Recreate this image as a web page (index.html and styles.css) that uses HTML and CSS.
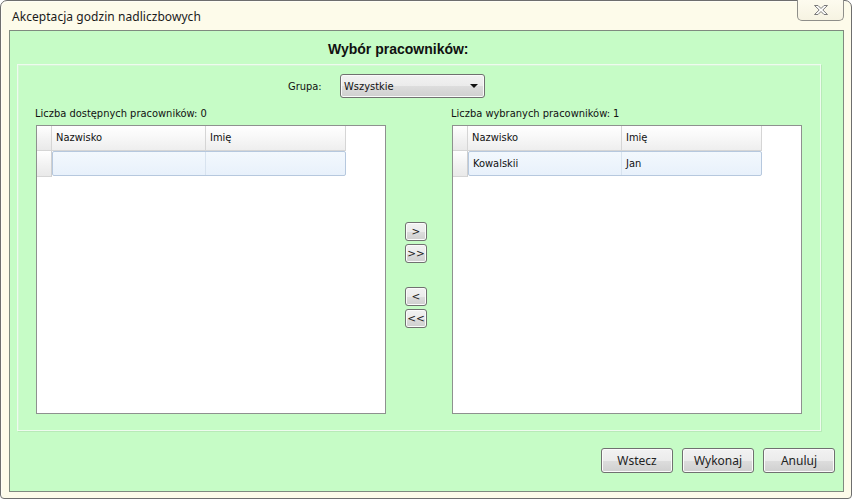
FILE: index.html
```html
<!DOCTYPE html>
<html>
<head>
<meta charset="utf-8">
<link rel="stylesheet" href="styles.css">
</head>
<body>
<div class="window">
  <div class="titlebar">
    <span class="wtitle">Akceptacja godzin nadliczbowych</span>
    <div class="close">
      <svg width="18" height="12" viewBox="0 0 18 12"><path d="M2.5 1.5h3.5l3 3 3-3h3.5l-4.7 4.5 4.7 4.5h-3.5l-3-3-3 3h-3.5l4.7-4.5z" fill="#fff" stroke="#7a7a7a" stroke-width="1" stroke-linejoin="round"/></svg>
    </div>
  </div>
  <div class="panel">
    <div class="heading">Wybór pracowników:</div>
    <div class="group">
      <div class="grouprow">
        <span class="glabel">Grupa:</span>
        <div class="combo"><span>Wszystkie</span><span class="arrow"></span></div>
      </div>
      <div class="lists">
        <div class="listcol">
          <div class="count">Liczba dostępnych pracowników: 0</div>
          <div class="grid">
            <div class="ghead">
              <div class="rh"></div>
              <div class="hc c1">Nazwisko</div>
              <div class="hc c2">Imię</div>
            </div>
            <div class="grow">
              <div class="rh rowh"></div>
              <div class="cells"><div class="dc c1"></div><div class="dc c2"></div></div>
            </div>
          </div>
        </div>
        <div class="moves">
          <div class="mgroup">
            <button class="mbtn">&gt;</button>
            <button class="mbtn">&gt;&gt;</button>
          </div>
          <div class="mgroup">
            <button class="mbtn">&lt;</button>
            <button class="mbtn">&lt;&lt;</button>
          </div>
        </div>
        <div class="listcol">
          <div class="count">Liczba wybranych pracowników: 1</div>
          <div class="grid">
            <div class="ghead">
              <div class="rh"></div>
              <div class="hc c1">Nazwisko</div>
              <div class="hc c2">Imię</div>
            </div>
            <div class="grow">
              <div class="rh rowh"></div>
              <div class="cells"><div class="dc c1">Kowalskii</div><div class="dc c2">Jan</div></div>
            </div>
          </div>
        </div>
      </div>
    </div>
    <div class="actions">
      <button class="abtn">Wstecz</button>
      <button class="abtn">Wykonaj</button>
      <button class="abtn">Anuluj</button>
    </div>
  </div>
</div>
</body>
</html>
```
FILE: styles.css
```css
* { box-sizing: border-box; }
html, body { margin: 0; padding: 0; background: #ffffff; }
body { width: 852px; height: 499px; overflow: hidden; font-family: "Liberation Sans", Arial, sans-serif; }

.window {
  width: 852px; height: 499px;
  background: #fdfbea;
  border: 1px solid #6e6e6e;
  border-radius: 7px 7px 4px 4px;
  box-shadow: inset 1px 1px 0 #fffef6;
  display: flex; flex-direction: column;
  position: relative;
}
.titlebar {
  height: 29px; flex: none;
  display: flex; align-items: center;
  padding-left: 11px;
}
.wtitle {
  font-family: "Noto Sans", "Open Sans", sans-serif;
  font-size: 12px; color: #1a1a1a; letter-spacing: 0.05px;
  margin-top: 2px;
}
.close {
  position: absolute; top: -1px; right: 7px;
  width: 47px; height: 21px;
  border: 1px solid #8f8f8a; border-top: none;
  border-radius: 0 0 5px 5px;
  background: linear-gradient(#fdfbef, #f6f3e2);
  display: flex; align-items: center; justify-content: center;
}

.panel {
  flex: 1;
  margin: 0 7px 6px 8px;
  background: #c6fcc6;
  border: 1px solid #7f8a7f;
  display: flex; flex-direction: column;
}
.heading {
  height: 33px; flex: none;
  font-weight: bold; font-size: 14px; color: #111;
  padding-left: 318px; padding-top: 10px;
}
.group {
  margin: 0 22px 0 7px;
  height: 367px; flex: none;
  border: 1px solid #eefbee;
  box-shadow: inset 1px 1px 0 #d5f5d5, 1px 1px 0 #b8eab8;
  padding: 9px 18px 0 18px;
  display: flex; flex-direction: column;
}
.grouprow {
  height: 24px; display: flex; align-items: center;
  padding-left: 252px;
}
.glabel {
  font-family: "DejaVu Sans Condensed", "DejaVu Sans", sans-serif; font-size: 11px; color: #111;
  width: 52px;
}
.combo {
  width: 145px; height: 24px;
  border: 1px solid #707070; border-radius: 3px;
  background: linear-gradient(#f2f2f2 0%, #ebebeb 50%, #dddddd 51%, #cfcfcf 100%);
  box-shadow: inset 0 0 0 1px #fafafa;
  display: flex; align-items: center; justify-content: space-between;
  padding: 0 6px 0 3px;
  font-family: "DejaVu Sans Condensed", "DejaVu Sans", sans-serif; font-size: 11px; color: #111;
}
.arrow {
  width: 0; height: 0;
  border-left: 4px solid transparent; border-right: 4px solid transparent;
  border-top: 4px solid #111;
}
.lists { display: flex; margin-top: 7px; }
.listcol { width: 350px; display: flex; flex-direction: column; }
.count {
  font-family: "DejaVu Sans Condensed", "DejaVu Sans", sans-serif; font-size: 11px; color: #111;
  height: 20px; padding-top: 2px; margin-left: -1px;
}
.grid {
  width: 350px; height: 289px;
  border: 1px solid #8e918f; background: #fff;
}
.ghead { display: flex; height: 25px; }
.rh { width: 15px; flex: none; background: linear-gradient(#fff, #f1f1f1 60%, #e9e9e9); border-right: 1px solid #d5d5d5; border-bottom: 1px solid #d5d5d5; }
.hc {
  height: 25px;
  background: linear-gradient(#ffffff, #f7f7f7 50%, #eeeeee);
  border-right: 1px solid #d5d5d5; border-bottom: 1px solid #d5d5d5;
  font-family: "DejaVu Sans Condensed", "DejaVu Sans", sans-serif; font-size: 11px; color: #111;
  padding: 5px 0 0 4px;
}
.c1 { width: 154px; }
.c2 { width: 140px; }
.grow { display: flex; height: 26px; }
.rowh { height: 26px; border-right: 1px solid #cfcfcf; }
.cells {
  display: flex;
  border: 1px solid #b6c8de; border-radius: 2px;
  background: linear-gradient(#f3f8fd, #e8f1fb);
  height: 25px;
}
.dc {
  font-family: "DejaVu Sans Condensed", "DejaVu Sans", sans-serif; font-size: 11px; color: #111;
  padding: 5px 0 0 4px; border-right: 1px solid #d8e3ef;
}
.cells .c1 { width: 153px; }
.cells .c2 { width: 139px; border-right: none; }

.moves {
  width: 66px; flex: none;
  display: flex; flex-direction: column; align-items: flex-start;
  padding: 117px 0 0 19px; gap: 24px;
}
.mgroup { display: flex; flex-direction: column; gap: 3px; }
.mbtn {
  width: 22px; height: 19px; padding: 0; margin: 0;
  border: 1px solid #707070; border-radius: 3px;
  background: linear-gradient(#f2f2f2 0%, #ebebeb 50%, #dddddd 51%, #cfcfcf 100%);
  box-shadow: inset 0 0 0 1px #fbfbfb;
  font-family: "DejaVu Sans", sans-serif; font-size: 10.5px; color: #222;
  line-height: 15px;
}

.actions {
  display: flex; justify-content: flex-end; gap: 9px;
  padding: 17px 8px 0 0;
}
.abtn {
  width: 72px; height: 25px; padding: 0; margin: 0;
  border: 1px solid #707070; border-radius: 3px;
  background: linear-gradient(#f2f2f2 0%, #ebebeb 50%, #dddddd 51%, #cfcfcf 100%);
  box-shadow: inset 0 0 0 1px #fbfbfb;
  font-family: "Noto Sans", "Open Sans", sans-serif; font-size: 12px; color: #222;
}
```
